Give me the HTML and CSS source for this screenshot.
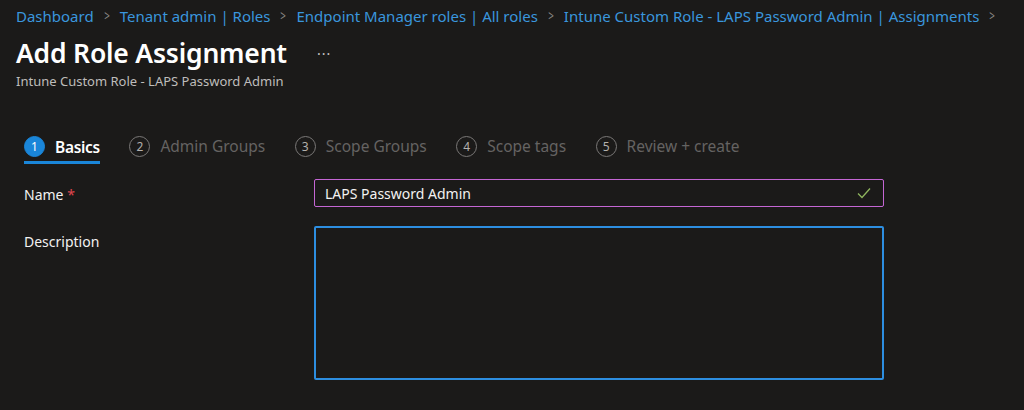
FILE: index.html
```html
<!DOCTYPE html>
<html lang="en">
<head>
<meta charset="utf-8">
<title>Add Role Assignment</title>
<link rel="stylesheet" href="styles.css">
</head>
<body>
<div class="page">
  <nav class="breadcrumb">
    <a class="crumb">Dashboard</a><span class="sep">&gt;</span>
    <a class="crumb">Tenant admin | Roles</a><span class="sep">&gt;</span>
    <a class="crumb">Endpoint Manager roles | All roles</a><span class="sep">&gt;</span>
    <a class="crumb">Intune Custom Role - LAPS Password Admin | Assignments</a><span class="sep">&gt;</span>
  </nav>
  <header class="header">
    <div class="title-row">
      <h1 class="title">Add Role Assignment</h1>
      <span class="more">···</span>
    </div>
    <div class="subtitle">Intune Custom Role - LAPS Password Admin</div>
  </header>
  <div class="steps">
    <div class="step active"><span class="num">1</span><span class="label">Basics</span></div>
    <div class="step"><span class="num">2</span><span class="label">Admin Groups</span></div>
    <div class="step"><span class="num">3</span><span class="label">Scope Groups</span></div>
    <div class="step"><span class="num">4</span><span class="label">Scope tags</span></div>
    <div class="step"><span class="num">5</span><span class="label">Review + create</span></div>
  </div>
  <div class="form">
    <div class="row">
      <label class="field-label">Name <span class="req">*</span></label>
      <div class="input name-input">
        <span class="value">LAPS Password Admin</span>
        <svg class="check" width="14" height="12" viewBox="0 0 14 12"><path d="M1 6.5 L5 10.5 L13 1.5" fill="none" stroke="#8fb55e" stroke-width="1.3"/></svg>
      </div>
    </div>
    <div class="row">
      <label class="field-label">Description</label>
      <div class="textarea"></div>
    </div>
  </div>
</div>
</body>
</html>
```
FILE: styles.css
```css
* { box-sizing: border-box; }
html, body { margin: 0; padding: 0; }
body {
  background: #1b1a19;
  color: #f3f2f1;
  font-family: "Noto Sans", "Open Sans", sans-serif;
  width: 1024px;
  height: 410px;
  overflow: hidden;
}
.page { padding: 0 16px; }
.breadcrumb {
  display: flex;
  align-items: center;
  height: 31px;
  font-size: 15px;
  white-space: nowrap;
}
.crumb { color: #3a96dd; }
.sep { color: #8a8886; margin: 0 9px; font-size: 14px; transform: scaleX(0.7); display: inline-block; }
.header { margin-top: 4px; }
.title-row { display: flex; align-items: center; height: 36px; }
.title {
  margin: 0;
  font-size: 26.5px;
  font-weight: 600;
  color: #ffffff;
  letter-spacing: -0.2px;
}
.more { color: #c8c6c4; margin-left: 30px; font-size: 14px; letter-spacing: 1px; }
.subtitle { font-size: 13px; color: #bfbdbb; margin-top: 1px; height: 20px; }
.steps {
  display: flex;
  margin: 38px 0 0 8px;
  height: 34px;
  gap: 29.5px;
}
.step {
  display: flex;
  align-items: center;
  height: 32px;
  color: #656362;
  font-size: 15.5px;
}
.step.active {
  color: #ffffff;
  font-weight: 600;
  border-bottom: 3px solid #1a86d9;
  height: 34px;
  padding-top: 2px;
}
.step.active .label { letter-spacing: -0.3px; }
.num {
  width: 21px;
  height: 21px;
  border-radius: 50%;
  border: 1.5px solid #7a7877;
  color: #b3b0ad;
  font-size: 12px;
  font-weight: 400;
  display: inline-flex;
  align-items: center;
  justify-content: center;
  margin-right: 10px;
  letter-spacing: 0;
}
.step.active .num {
  background: #1a86d9;
  border-color: #1a86d9;
  color: #ffffff;
}
.form { margin: 15px 0 0 8px; }
.row {
  display: grid;
  grid-template-columns: 290px 570px;
  margin-bottom: 19px;
}
.field-label { font-size: 14px; color: #f3f2f1; padding-top: 6px; }
.req { color: #e0464f; }
.input {
  height: 28px;
  border: 1px solid #c466d4;
  border-radius: 2px;
  display: flex;
  align-items: center;
  justify-content: space-between;
  padding: 0 12px 0 10px;
  font-size: 14px;
  color: #f3f2f1;
}
.textarea {
  height: 154px;
  border: 2px solid #2d8ee0;
  border-radius: 2px;
}
```
